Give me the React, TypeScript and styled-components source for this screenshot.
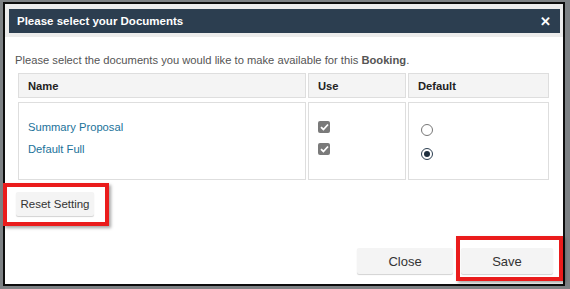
import React, { useState } from 'react'
import styled, { createGlobalStyle } from 'styled-components'

const GlobalStyle = createGlobalStyle`
  html, body {
    margin: 0;
    padding: 0;
  }
  body {
    font-family: 'Liberation Sans', Arial, sans-serif;
    background: #7d8184;
  }
`

const Page = styled.div`
  width: 570px;
  height: 289px;
  box-sizing: border-box;
  padding: 2px 5px 3px 3px;
`

const Frame = styled.div`
  position: relative;
  height: 100%;
  box-sizing: border-box;
  border: 2px solid #0d0d0d;
  background: #fff;
  display: flex;
  flex-direction: column;
`

const HeaderWrap = styled.div`
  background: #ececec;
  padding: 5px 3px 4px 4px;
`

const Header = styled.div`
  height: 24px;
  background: #2c3e50;
  color: #fff;
  display: flex;
  align-items: center;
  justify-content: space-between;
  padding: 0 9px 0 8px;
  font-weight: bold;
  font-size: 11.5px;
`

const CloseX = styled.span`
  font-size: 13px;
  line-height: 1;
`

const Body = styled.div`
  flex: 1;
  display: flex;
  flex-direction: column;
  padding: 0 0 0 10px;
`

const Intro = styled.p`
  margin: 16px 0 0 0;
  font-size: 11.2px;
  line-height: 15px;
  color: #555;
`

const Table = styled.table`
  margin-top: 1px;
  margin-left: 1px;
  width: 535px;
  table-layout: fixed;
  border-collapse: separate;
  border-spacing: 2px 4px;
  font-size: 11.2px;
`

const Th = styled.th`
  box-sizing: border-box;
  height: 25px;
  background: #f4f4f4;
  border: 1px solid #dedede;
  text-align: left;
  padding: 0 0 0 9px;
  color: #222;
  font-weight: bold;
`

const Td = styled.td`
  height: 78px;
  box-sizing: border-box;
  border: 1px solid #dedede;
  vertical-align: top;
  padding: 14px 0 0 9px;
`

const List = styled.div<{ $gap: number; $top: number }>`
  display: flex;
  flex-direction: column;
  gap: ${(p) => p.$gap}px;
  margin-top: ${(p) => p.$top}px;
`

const DocLink = styled.a`
  color: #21729a;
  text-decoration: none;
  line-height: 15px;
  cursor: pointer;
`

const Check = styled.span`
  width: 12px;
  height: 12px;
  border-radius: 2px;
  background: #7a7a7a;
  display: flex;
  align-items: center;
  justify-content: center;
`

const Radio = styled.span<{ $on: boolean }>`
  width: 10px;
  height: 10px;
  border-radius: 50%;
  border: 1px solid ${(p) => (p.$on ? '#2c3e50' : '#777')};
  background: #fff;
  display: flex;
  align-items: center;
  justify-content: center;
  margin-left: 3px;
  cursor: pointer;

  &::after {
    content: '';
    width: 6px;
    height: 6px;
    border-radius: 50%;
    background: ${(p) => (p.$on ? '#1f2f3f' : 'transparent')};
  }
`

const Button = styled.button<{ $w: number; $h: number; $fs: number }>`
  width: ${(p) => p.$w}px;
  height: ${(p) => p.$h}px;
  font-size: ${(p) => p.$fs}px;
  background: #f4f4f4;
  border: none;
  border-radius: 2px;
  box-shadow: 0 1px 1px rgba(0, 0, 0, 0.18);
  font-family: 'Liberation Sans', Arial, sans-serif;
  color: #333;
  padding: 0;
  cursor: pointer;
`

const ResetRow = styled.div`
  margin: 8px 0 0 1px;
  display: flex;
`

const Footer = styled.div`
  margin: 32px 0 0 0;
  padding-right: 10px;
  display: flex;
  justify-content: flex-end;
  gap: 8px;
`

const Marked = styled.div`
  position: relative;
  display: inline-flex;
`

const Ring = styled.span<{ $t: number; $r: number; $b: number; $l: number }>`
  position: absolute;
  top: ${(p) => p.$t}px;
  right: ${(p) => p.$r}px;
  bottom: ${(p) => p.$b}px;
  left: ${(p) => p.$l}px;
  border: 4px solid #ea1c1c;
  box-shadow: 2px 2px 3px rgba(0, 0, 0, 0.35);
  pointer-events: none;
  z-index: 2;
`

const CheckMark = () => (
  <svg width="9" height="8" viewBox="0 0 9 8">
    <path d="M1 4.2 L3.4 6.5 L8 1.5" stroke="#fff" strokeWidth="1.8" fill="none" />
  </svg>
)

const docs = ['Summary Proposal', 'Default Full']

export default function App(): JSX.Element {
  const [selected, setSelected] = useState<number>(1)

  return (
    <Page>
      <GlobalStyle />
      <Frame>
        <HeaderWrap>
          <Header>
            <span>Please select your Documents</span>
            <CloseX>✕</CloseX>
          </Header>
        </HeaderWrap>
        <Body>
          <Intro>
            Please select the documents you would like to make available for this <b>Booking</b>.
          </Intro>
          <Table>
            <colgroup>
              <col style={{ width: 288 }} />
              <col style={{ width: 98 }} />
              <col style={{ width: 141 }} />
            </colgroup>
            <thead>
              <tr>
                <Th>Name</Th>
                <Th>Use</Th>
                <Th>Default</Th>
              </tr>
            </thead>
            <tbody>
              <tr>
                <Td>
                  <List $gap={7} $top={3}>
                    {docs.map((d) => (
                      <DocLink key={d}>{d}</DocLink>
                    ))}
                  </List>
                </Td>
                <Td>
                  <List $gap={10} $top={4}>
                    {docs.map((d) => (
                      <Check key={d}>
                        <CheckMark />
                      </Check>
                    ))}
                  </List>
                </Td>
                <Td>
                  <List $gap={12} $top={7}>
                    {docs.map((d, i) => (
                      <Radio key={d} $on={selected === i} onClick={() => setSelected(i)} />
                    ))}
                  </List>
                </Td>
              </tr>
            </tbody>
          </Table>
          <ResetRow>
            <Marked>
              <Button $w={78} $h={24} $fs={11.5}>
                Reset Setting
              </Button>
              <Ring $t={-9} $r={-15} $b={-10} $l={-13} />
            </Marked>
          </ResetRow>
          <Footer>
            <Button $w={96} $h={26} $fs={13}>
              Close
            </Button>
            <Marked>
              <Button $w={92} $h={26} $fs={13}>
                Save
              </Button>
              <Ring $t={-12} $r={-10} $b={-7} $l={-5} />
            </Marked>
          </Footer>
        </Body>
      </Frame>
    </Page>
  )
}
